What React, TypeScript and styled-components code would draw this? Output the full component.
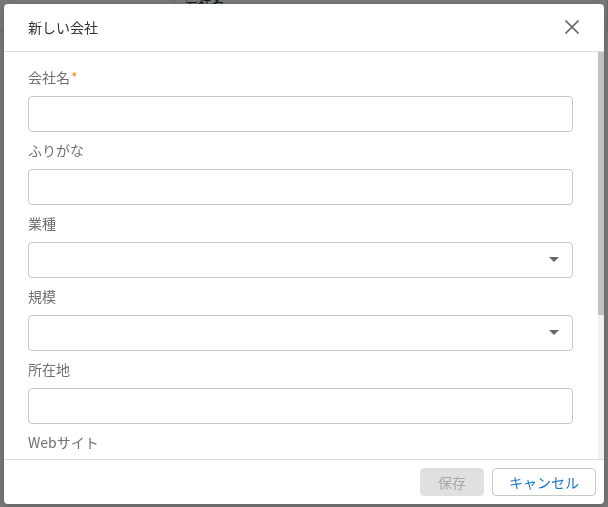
import React from 'react'
import styled, { createGlobalStyle } from 'styled-components'

const GlobalStyle = createGlobalStyle`
  html, body {
    margin: 0;
    padding: 0;
    height: 100%;
    overflow: hidden;
    font-family: 'Noto Sans CJK JP', 'Noto Sans', sans-serif;
  }
`

const Page = styled.div`
  width: 608px;
  height: 507px;
  background: #fff;
`

const BgTable = styled.div`
  display: grid;
  grid-template-columns: 175px 1fr;
  border-bottom: 1px solid #ddd;
  height: 30px;
  overflow: hidden;
`

const BgCell = styled.div`
  border-right: 1px solid #ddd;
  padding: 0 10px;
  font-size: 13px;
  color: #333;
  line-height: 30px;
  margin-top: -14px;
`

const Overlay = styled.div`
  position: fixed;
  inset: 0;
  background: rgba(0, 0, 0, 0.53);
  display: flex;
  align-items: center;
  justify-content: center;
`

const Modal = styled.div`
  width: 600px;
  height: 500px;
  background: #fff;
  border-radius: 4px;
  display: flex;
  flex-direction: column;
  overflow: hidden;
  box-shadow: 0 2px 10px rgba(0, 0, 0, 0.2);
`

const Header = styled.div`
  height: 47px;
  flex: none;
  display: flex;
  align-items: center;
  justify-content: space-between;
  padding: 0 22px 0 24px;
  border-bottom: 1px solid #ddd;
`

const Title = styled.h2`
  margin: 0;
  font-size: 14px;
  font-weight: 400;
  color: #333;
`

const CloseButton = styled.button`
  border: none;
  background: none;
  padding: 0;
  width: 20px;
  height: 20px;
  display: flex;
  align-items: center;
  justify-content: center;
  cursor: pointer;
`

const BodyWrap = styled.div`
  flex: 1;
  min-height: 0;
  display: flex;
`

const Body = styled.div`
  flex: 1;
  overflow: hidden;
  padding: 15px 25px 0 24px;
`

const ScrollTrack = styled.div`
  width: 6px;
  flex: none;
  background: #f1f1f1;
  display: flex;
  flex-direction: column;
`

const ScrollThumb = styled.div`
  background: #c1c1c1;
  height: 263px;
`

const Field = styled.div`
  display: flex;
  flex-direction: column;
  margin-bottom: 8px;
`

const Label = styled.label`
  font-size: 14px;
  line-height: 20px;
  color: #707070;
  margin-bottom: 9px;
`

const Required = styled.span`
  color: #f08c28;
  margin-left: 1px;
`

const Input = styled.input`
  box-sizing: border-box;
  height: 36px;
  width: 100%;
  border: 1px solid #c8c8c8;
  border-radius: 4px;
  padding: 0 10px;
  font-size: 14px;
  outline: none;
  background: #fff;
`

const SelectBox = styled.div`
  box-sizing: border-box;
  height: 36px;
  width: 100%;
  border: 1px solid #c8c8c8;
  border-radius: 4px;
  display: flex;
  align-items: center;
  justify-content: flex-end;
  padding-right: 13px;
`

const Caret = styled.span`
  width: 0;
  height: 0;
  border-left: 5px solid transparent;
  border-right: 5px solid transparent;
  border-top: 5px solid #666;
`

const Footer = styled.div`
  height: 44px;
  flex: none;
  border-top: 1px solid #ddd;
  display: flex;
  align-items: center;
  justify-content: flex-end;
  gap: 8px;
  padding: 0 8px;
`

const Button = styled.button<{ $primary?: boolean }>`
  height: 28px;
  box-sizing: border-box;
  border-radius: 4px;
  font-family: inherit;
  font-size: 14px;
  padding: 0;
  width: ${(p) => (p.$primary ? '64px' : '104px')};
  border: 1px solid ${(p) => (p.$primary ? '#e0e0e0' : '#c8c8c8')};
  background: ${(p) => (p.$primary ? '#e0e0e0' : '#fff')};
  color: ${(p) => (p.$primary ? '#a9a9a9' : '#1b76cf')};
`

const fields: { label: string; type: 'input' | 'select'; required?: boolean }[] = [
  { label: '会社名', type: 'input', required: true },
  { label: 'ふりがな', type: 'input' },
  { label: '業種', type: 'select' },
  { label: '規模', type: 'select' },
  { label: '所在地', type: 'input' },
  { label: 'Webサイト', type: 'input' },
]

const App = () => {
  return (
    <Page>
      <GlobalStyle />
      <BgTable>
        <BgCell />
        <BgCell>会社名</BgCell>
      </BgTable>
      <Overlay>
        <Modal>
          <Header>
            <Title>新しい会社</Title>
            <CloseButton aria-label="close">
              <svg width="14" height="14" viewBox="0 0 14 14">
                <path d="M0.5 0.5 L13.5 13.5 M13.5 0.5 L0.5 13.5" stroke="#6b6b6b" strokeWidth="1.6" />
              </svg>
            </CloseButton>
          </Header>
          <BodyWrap>
            <Body>
              {fields.map((f) => (
                <Field key={f.label}>
                  <Label>
                    {f.label}
                    {f.required && <Required>*</Required>}
                  </Label>
                  {f.type === 'input' ? (
                    <Input />
                  ) : (
                    <SelectBox>
                      <Caret />
                    </SelectBox>
                  )}
                </Field>
              ))}
            </Body>
            <ScrollTrack>
              <ScrollThumb />
            </ScrollTrack>
          </BodyWrap>
          <Footer>
            <Button $primary disabled>
              保存
            </Button>
            <Button>キャンセル</Button>
          </Footer>
        </Modal>
      </Overlay>
    </Page>
  )
}

export default App
